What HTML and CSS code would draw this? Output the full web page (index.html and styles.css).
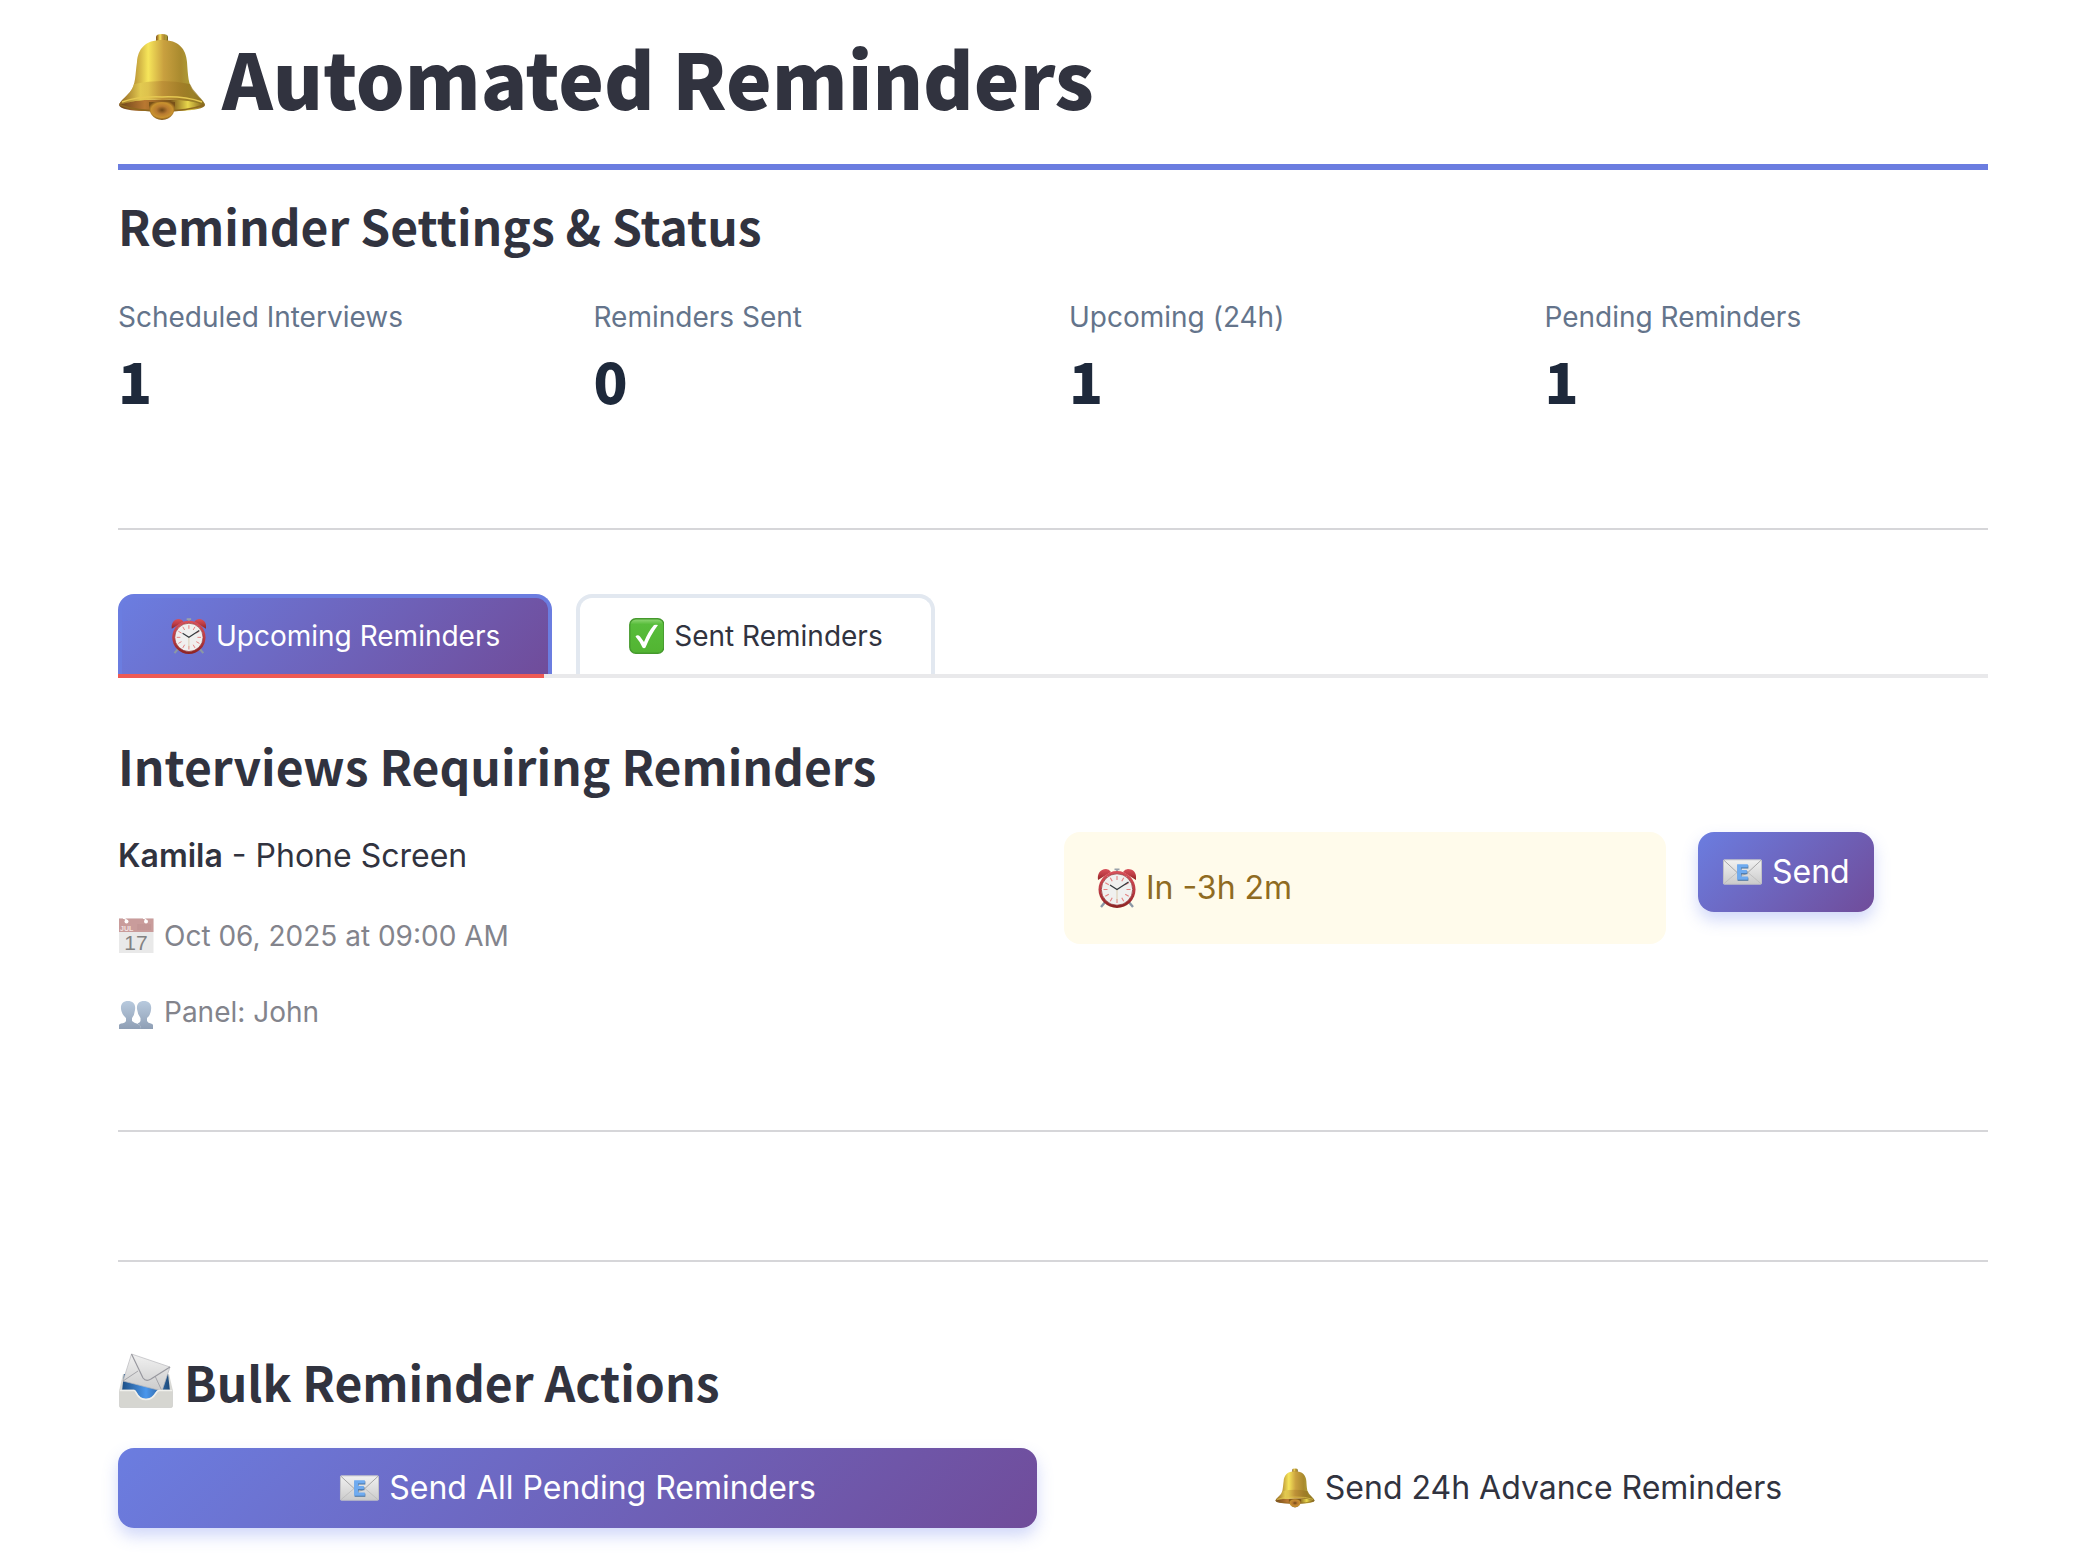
FILE: index.html
```html
<!DOCTYPE html>
<html lang="en">
<head>
<meta charset="utf-8">
<meta name="viewport" content="width=device-width, initial-scale=1">
<title>Automated Reminders</title>
<link rel="stylesheet" href="styles.css">
</head>
<body>
<svg class="sprite" aria-hidden="true">
  <defs>
    <linearGradient id="gold" x1="0" x2="1" y1="0" y2="0">
      <stop offset="0" stop-color="#7d521c"/><stop offset=".12" stop-color="#a97c2c"/><stop offset=".34" stop-color="#f6e55a"/><stop offset=".52" stop-color="#c9a03f"/><stop offset=".72" stop-color="#a98a2e"/><stop offset=".86" stop-color="#aea23a"/><stop offset="1" stop-color="#5e4716"/>
    </linearGradient>
    <linearGradient id="goldSkirt" x1="0" x2="1" y1="0" y2="0">
      <stop offset="0" stop-color="#946a22"/><stop offset=".25" stop-color="#e6cf54"/><stop offset=".5" stop-color="#b98b35"/><stop offset=".8" stop-color="#967420"/><stop offset="1" stop-color="#977d24"/>
    </linearGradient>
    <linearGradient id="rim" x1="0" x2="1" y1="0" y2="0">
      <stop offset="0" stop-color="#6b431b"/><stop offset=".3" stop-color="#b97831"/><stop offset=".6" stop-color="#7b5518"/><stop offset=".8" stop-color="#e8d64c"/><stop offset="1" stop-color="#7a5a18"/>
    </linearGradient>
    <radialGradient id="clapper" cx=".5" cy=".45" r=".55">
      <stop offset="0" stop-color="#6e4716"/><stop offset=".4" stop-color="#b87a30"/><stop offset=".75" stop-color="#c9922f"/><stop offset="1" stop-color="#795118"/>
    </radialGradient>
    <linearGradient id="red" x1="0" x2="0" y1="0" y2="1">
      <stop offset="0" stop-color="#d8505a"/><stop offset=".5" stop-color="#bd3c45"/><stop offset="1" stop-color="#8c2221"/>
    </linearGradient>
    <linearGradient id="green" x1="0" x2="0" y1="0" y2="1">
      <stop offset="0" stop-color="#93d878"/><stop offset=".16" stop-color="#58bd3b"/><stop offset="1" stop-color="#52b432"/>
    </linearGradient>
    <linearGradient id="paper" x1="0" x2="0" y1="0" y2="1">
      <stop offset="0" stop-color="#f1f1f1"/><stop offset="1" stop-color="#cbcbcb"/>
    </linearGradient>
    <linearGradient id="bust" x1="0" x2="0" y1="0" y2="1">
      <stop offset="0" stop-color="#b8cade"/><stop offset="1" stop-color="#8f9fb5"/>
    </linearGradient>
    <linearGradient id="tray" x1="0" x2="1" y1="0" y2="0">
      <stop offset="0" stop-color="#1d4f85"/><stop offset=".5" stop-color="#4b97ec"/><stop offset="1" stop-color="#1c4877"/>
    </linearGradient>
  </defs>
  <symbol id="bell" viewBox="0 0 88 86">
    <path d="M1 71 Q3 77 30 77 H60 Q86 76 87 71 L80 66 H8Z" fill="url(#rim)"/>
    <path d="M38 3 Q38 0 44 0 Q50 0 50 3 V9 H38Z" fill="url(#gold)"/>
    <path d="M38 6 Q44 8.500 50 6" fill="none" stroke="#8b6620"/>
    <path d="M44 6 C61 6 68 15 69 28 C70 41 70 51 76 58 C81 64 86 67 87 71 Q70 65 44 66 Q18 65 1 71 C2 67 7 64 12 58 C18 51 17 41 19 28 C20 15 27 6 44 6Z" fill="url(#gold)"/>
    <path d="M16 50 Q44 44 72 50 Q74 55 79 60 C83 65 86 67 87 71 Q70 65 44 66 Q18 65 1 71 C2 67 7 64 12 58 Q15 54 16 50Z" fill="url(#goldSkirt)" opacity=".75"/>
    <path d="M4 68 Q22 62 44 63 Q66 62 84 68" fill="none" stroke="#e5c851" stroke-width="1.500"/>
    <path d="M2 71 Q18 77 44 77 Q70 77 86 71" fill="none" stroke="#8e681f" stroke-width="1.500"/>
    <path d="M31 68 H57 Q58 85 44 86 Q30 85 31 68Z" fill="url(#clapper)"/>
  </symbol>
  <symbol id="clock" viewBox="-1 0 40 40">
    <path d="M9 33 L4 39 M31 33 L36 39" stroke="#8b97a5" stroke-width="2.400"/>
    <path d="M20 1 V5 M17.500 1.300 H22.500" stroke="#9aa1aa" stroke-width="1.800"/>
    <path d="M1 12 C0 6 3 1 9 1 Q12 1 14 4Z" fill="url(#red)"/>
    <path d="M39 12 C40 6 37 1 31 1 Q28 1 26 4Z" fill="url(#red)"/>
    <circle cx="20" cy="21.500" r="18.500" fill="url(#red)"/>
    <circle cx="20" cy="21.500" r="15.700" fill="#f0f0ef" stroke="#8c2d31" stroke-width=".7"/>
    <g stroke="#e58282" stroke-width="1.100">
      <path d="M20 8 v4 M20 31 v4 M6.500 21.500 h4 M29.500 21.500 h4 M13.250 9.800 l2 3.500 M26.750 9.800 l-2 3.500 M13.250 33.200 l2 -3.500 M26.750 33.200 l-2 -3.500 M8.300 14.750 l3.500 2 M31.700 14.750 l-3.500 2 M8.300 28.250 l3.500 -2 M31.700 28.250 l-3.500 -2"/>
    </g>
    <path d="M20 21.500 V33" stroke="#d9c7a7" stroke-width=".9"/>
    <path d="M13 17 L20 21.500 L31.500 14" fill="none" stroke="#333a3e" stroke-width="1.300"/>
  </symbol>
  <symbol id="check" viewBox="-1 0 36 36">
    <rect x=".8" y=".8" width="34" height="34.400" rx="6" fill="url(#green)" stroke="#45992d" stroke-width="1.400"/>
    <path d="M6.500 18.500 Q8.500 16 11 18.500 L15 24 Q19 14 25 7 Q27 6.300 29 7 Q21.500 17 16.500 29.500 Q15 31 13.500 29.500 Q10.500 23 6.500 18.500Z" fill="#fff"/>
  </symbol>
  <symbol id="mail" viewBox="-1 0 41 26">
    <rect x=".5" y=".5" width="39" height="25" rx=".8" fill="url(#paper)" stroke="#c2c2c6"/>
    <path d="M1 25 L15 13 M39 25 L25 13" stroke="#b9b9b9" stroke-width=".8"/>
    <path d="M1 1 L15 14 Q20 18 25 14 L39 1" fill="none" stroke="#a5a5a5"/>
    <path d="M15 6 H26 V9.500 H19 V12 H25 V15.200 H19 V18.600 H26 V22 H15Z" fill="#47719f"/>
    <path d="M14.500 5 H25.500 V8.500 H18.500 V11 H24.500 V14.200 H18.500 V17.600 H25.500 V21 H14.500Z" fill="#6fabf0"/>
  </symbol>
  <symbol id="people" viewBox="0 -6 36 36">
    <path d="M10 1 C15 1 18 4 17 10 Q16.500 15 14 18 V21 Q16 23 20 24 Q23 25 23 29 H1 V25 Q1 24 3 23.500 Q7 23 8 21 V18 Q3.500 14 3 9 C2.500 4 5 1 10 1Z" fill="url(#bust)"/>
    <path d="M26 1 C31 1 34 4 33 10 Q32.500 15 29 18 V21 Q30 23 33 23.500 Q35 24 35 25 V29 H23 Q23 25 19.500 23.500 Q22 22.500 22.500 21 V18 Q19.500 14 19 9 C18.500 4 21 1 26 1Z" fill="url(#bust)"/>
  </symbol>
  <symbol id="inbox" viewBox="0 0 56 56">
    <path d="M5 21 H51 L55 38 H1Z" fill="#d8d8d4"/>
    <path d="M6 21 H50 L52 38 Q28 54 4 38Z" fill="url(#tray)"/>
    <path d="M13.500 1 L52 14 L44 38 L5 28Z" fill="url(#paper)" stroke="#b9b9bd" stroke-width=".7"/>
    <path d="M5 28 L20 18 M44 38 L37 23" stroke="#a5a5aa"/>
    <path d="M13.500 1 L25 25 Q28 29 33 26 L52 14" fill="none" stroke="#98989f" stroke-width="1.200"/>
    <path d="M1.500 37 H16 C19 37 18 46 28 46 C38 46 37 37 41 37 H54.500 V53 Q54.500 54.500 53 54.500 H3 Q1.500 54.500 1.500 53Z" fill="#d6d6d1" stroke="#c6c6c2" stroke-width=".6"/>
    <path d="M1.500 37.500 H16 C19 37.500 18 46.500 28 46.500 C38 46.500 37 37.500 41 37.500 H54.500" fill="none" stroke="#f0f0ec" stroke-width="1.600"/>
  </symbol>
</svg>

<main class="page">
  <h1 class="title"><svg class="icon-title" aria-hidden="true"><use href="#bell"/></svg>Automated Reminders</h1>

  <section>
    <h2 class="heading">Reminder Settings &amp; Status</h2>
    <dl class="metrics">
      <div><dt>Scheduled Interviews</dt><dd>1</dd></div>
      <div><dt>Reminders Sent</dt><dd>0</dd></div>
      <div><dt>Upcoming (24h)</dt><dd>1</dd></div>
      <div><dt>Pending Reminders</dt><dd>1</dd></div>
    </dl>
  </section>

  <hr class="divider">

  <div class="tabs" role="tablist">
    <button class="tab tab-active" type="button" role="tab" aria-selected="true"><svg class="icon-small" aria-hidden="true"><use href="#clock"/></svg>Upcoming Reminders</button>
    <button class="tab" type="button" role="tab" aria-selected="false"><svg class="icon-small" aria-hidden="true"><use href="#check"/></svg>Sent Reminders</button>
    <span class="tab-highlight"></span>
  </div>

  <section class="panel" role="tabpanel">
    <h2 class="heading">Interviews Requiring Reminders</h2>
    <div class="interview">
      <div class="details">
        <p class="candidate"><strong>Kamila</strong> - Phone Screen</p>
        <p class="caption">
          <svg class="icon-small" viewBox="0 0 36 36" aria-hidden="true">
            <rect x="1" y=".5" width="34.500" height="34.500" fill="#e9e9e9"/>
            <path d="M1 .5 H35.500 V14 H1Z" fill="#c99c9b"/>
            <path d="M20 6 v6 M22 6 v6 M24 6 v6 M26 6 v6 M28 6 v6 M30 6 v6 M32 6 v6" stroke="#bd9190" stroke-width=".8"/>
            <circle cx="8.500" cy="3.500" r="2" fill="#fff"/><circle cx="28" cy="3.500" r="2" fill="#fff"/>
            <path d="M8.500 3 Q8 0 5 .5 M28 3 Q27.500 0 25 .5" fill="none" stroke="#fff" stroke-width="1.200"/>
            <text x="2" y="12.500" class="calendar-month">JUL</text>
            <text x="18" y="32" text-anchor="middle" class="calendar-day">17</text>
          </svg>
          Oct 06, 2025 at 09:00 AM
        </p>
        <p class="caption"><svg class="icon-small" aria-hidden="true"><use href="#people"/></svg>Panel: John</p>
      </div>
      <p class="alert"><svg class="icon" aria-hidden="true"><use href="#clock"/></svg>In -3h 2m</p>
      <button class="button button-primary" type="button"><svg class="icon" aria-hidden="true"><use href="#mail"/></svg>Send</button>
    </div>
    <hr class="divider">
  </section>

  <hr class="divider">

  <section class="bulk">
    <h2 class="heading"><svg class="icon-heading" aria-hidden="true"><use href="#inbox"/></svg>Bulk Reminder Actions</h2>
    <div class="actions">
      <button class="button button-primary" type="button"><svg class="icon" aria-hidden="true"><use href="#mail"/></svg>Send All Pending Reminders</button>
      <button class="button" type="button"><svg class="icon" aria-hidden="true"><use href="#bell"/></svg>Send 24h Advance Reminders</button>
    </div>
  </section>
</main>
</body>
</html>
```
FILE: styles.css
```css
:root {
  --ink: #31333f;
  --accent: #6b7de0;
  --gradient: linear-gradient(135deg, #6b7de0 0%, #704c9a 100%);
  --display: "Noto Sans CJK SC", "Noto Sans", sans-serif;
}

* { box-sizing: border-box; }

body {
  margin: 0;
  background: #fff;
  color: var(--ink);
  font: 400 32px/48px Inter, "Liberation Sans", sans-serif;
}

h1, h2, p, dl, dd { margin: 0; }

button {
  margin: 0;
  border: 0;
  background: none;
  color: inherit;
  font: inherit;
  cursor: pointer;
}

.sprite { position: absolute; width: 0; height: 0; }

.page { padding: 29px 112px 26px 118px; }

.title {
  display: flex;
  align-items: center;
  gap: 16px;
  padding-bottom: 39px;
  border-bottom: 6px solid var(--accent);
  font: 900 77px/96px var(--display);
}

.heading {
  display: flex;
  align-items: center;
  gap: 10px;
  margin-top: 23px;
  font: 700 48px/64px var(--display);
}

.icon-title { width: 88px; height: 86px; }
.icon-heading { width: 56px; height: 56px; }
.icon { flex: none; width: 40px; height: 40px; }
.icon-small { flex: none; width: 36px; height: 36px; }

.metrics {
  display: grid;
  grid-template-columns: repeat(4, 1fr);
  gap: 32px;
  margin-top: 40px;
}

.metrics dt { color: #64748b; font-size: 28px; line-height: 40px; }
.metrics dd {
  margin-top: 11px;
  color: #1e293b;
  font: 900 56px/64px var(--display);
}

.divider {
  margin: 116px 0 64px;
  border: 0;
  border-top: 2px solid #d6d6d9;
}

.tabs {
  position: relative;
  display: flex;
  gap: 24px;
  border-bottom: 4px solid #e9e9eb;
}

.tab {
  display: flex;
  align-items: center;
  gap: 10px;
  height: 80px;
  padding: 0 48px;
  border: 4px solid #e2e8f0;
  border-bottom: 0;
  border-radius: 16px 16px 0 0;
  font-size: 28px;
}

.tab-active {
  border-color: var(--accent);
  background: var(--gradient);
  color: #fff;
}

.tab-highlight {
  position: absolute;
  bottom: -4px;
  left: 0;
  width: 426px;
  height: 4px;
  background: #ee5a54;
}

.panel .heading { margin-top: 55px; }

.interview {
  display: grid;
  grid-template-columns: 914fr 602fr 290fr;
  align-items: start;
  gap: 32px;
  margin-top: 35px;
}

.details { display: grid; gap: 28px; }

.candidate { padding-bottom: 4px; }
.candidate strong { font-weight: 600; }

.caption {
  display: flex;
  align-items: center;
  gap: 10px;
  color: #83848c;
  font-size: 28px;
}

.calendar-month { fill: #f3e3e3; font: 700 7px/1 "Liberation Sans", sans-serif; }
.calendar-day { fill: #828282; font: 400 21px/1 "Liberation Sans", sans-serif; }

.alert {
  display: flex;
  align-items: center;
  gap: 10px;
  padding: 32px;
  border-radius: 16px;
  background: #fffbeb;
  color: #8f6b22;
}

.button {
  display: flex;
  align-items: center;
  justify-content: center;
  justify-self: start;
  gap: 10px;
  height: 80px;
  padding: 0 24px;
  border-radius: 16px;
}

.button-primary {
  background: var(--gradient);
  box-shadow: 0 8px 16px rgba(102, 126, 234, .3);
  color: #fff;
}

.panel .divider { margin: 94px 0 0; }
.panel + .divider { margin: 128px 0 0; }
.bulk .heading { margin-top: 87px; }

.actions {
  display: grid;
  grid-template-columns: 1fr 1fr;
  gap: 32px;
  margin-top: 35px;
}

.actions .button { justify-self: stretch; }
```
